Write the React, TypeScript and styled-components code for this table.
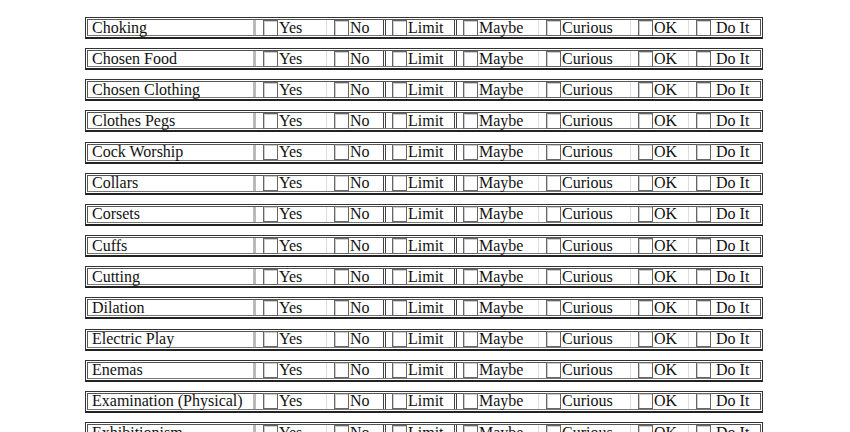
import React from "react";
import styled, { createGlobalStyle } from "styled-components";

const Global = createGlobalStyle`
  html, body { margin: 0; padding: 0; background: #fff; }
  body { font-family: "Liberation Serif", "Times New Roman", serif; color: #111; }
`;

const Page = styled.div`
  padding: 17px 0 0 85px;
  width: 850px;
  height: 432px;
  box-sizing: border-box;
  overflow: hidden;
`;

const Row = styled.div`
  display: flex;
  width: 678px;
  height: 22px;
  box-sizing: border-box;
  margin-bottom: 9.16px;
  border: 1px solid #333;
  border-bottom: 2px solid #222;
  padding: 1px;
  background: #fff;
`;

const Inner = styled.div`
  display: flex;
  flex: 1;
  border: 1px solid #555;
  border-bottom: 1px solid #777;
`;

const Label = styled.div`
  width: 161px;
  flex: none;
  display: flex;
  align-items: center;
  padding-left: 4px;
  font-size: 16px;
  line-height: 16px;
  border-right: 3px solid #bbb;
  white-space: nowrap;
`;

const Cell = styled.div<{ $w: number; $divider: "none" | "faint" | "double" }>`
  width: ${(p) => p.$w}px;
  flex: none;
  box-sizing: border-box;
  display: flex;
  align-items: center;
  padding-left: ${(p) => (p.$divider === "double" ? 6 : 7)}px;
  border-left: ${(p) =>
    p.$divider === "double"
      ? "3px double #444"
      : p.$divider === "faint"
      ? "1px solid #ddd"
      : "none"};
  font-size: 16px;
  line-height: 16px;
  white-space: nowrap;
`;

const Box = styled.span`
  display: inline-block;
  width: 13px;
  height: 14px;
  border: 1px solid #666;
  background: #fff;
  box-shadow: inset 1px 1px 0 #ccc;
  margin-right: 1px;
  flex: none;
`;

const Text = styled.span<{ $gap?: boolean }>`
  padding-left: ${(p) => (p.$gap ? 4 : 0)}px;
`;

const labels = [
  "Choking",
  "Chosen Food",
  "Chosen Clothing",
  "Clothes Pegs",
  "Cock Worship",
  "Collars",
  "Corsets",
  "Cuffs",
  "Cutting",
  "Dilation",
  "Electric Play",
  "Enemas",
  "Examination (Physical)",
  "Exhibitionism",
];

const options: { t: string; w: number; d: "none" | "faint" | "double"; gap?: boolean }[] = [
  { t: "Yes", w: 70, d: "none" },
  { t: "No", w: 57, d: "faint" },
  { t: "Limit", w: 71, d: "double" },
  { t: "Maybe", w: 84, d: "double" },
  { t: "Curious", w: 92, d: "faint" },
  { t: "OK", w: 58, d: "faint" },
  { t: "Do It", w: 71, d: "faint", gap: true },
];

export default function App() {
  return (
    <>
      <Global />
      <Page>
        {labels.map((l) => (
          <Row key={l}>
            <Inner>
              <Label>{l}</Label>
              {options.map((o) => (
                <Cell key={o.t} $w={o.w} $divider={o.d}>
                  <Box />
                  <Text $gap={o.gap}>{o.t}</Text>
                </Cell>
              ))}
            </Inner>
          </Row>
        ))}
      </Page>
    </>
  );
}
